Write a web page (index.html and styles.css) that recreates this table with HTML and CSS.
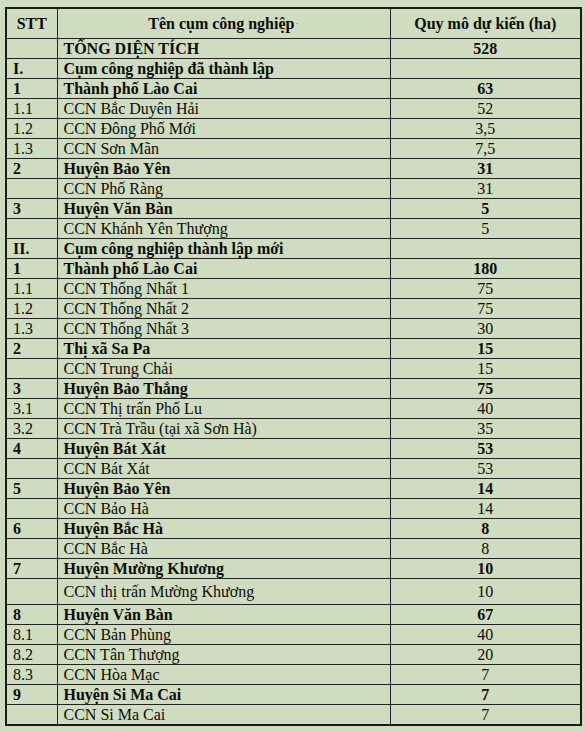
FILE: index.html
```html
<!DOCTYPE html>
<html lang="vi">
<head>
<meta charset="utf-8">
<title>Cụm công nghiệp</title>
<link rel="stylesheet" href="styles.css">
</head>
<body>
<table class="tbl">
  <colgroup>
    <col class="c-stt">
    <col class="c-name">
    <col class="c-qty">
  </colgroup>
  <thead>
    <tr class="head">
      <th>STT</th>
      <th>Tên cụm công nghiệp<span class="speck">·</span></th>
      <th>Quy mô dự kiến (ha)</th>
    </tr>
  </thead>
  <tbody>
    <tr class="b"><td></td><td>TỔNG DIỆN TÍCH</td><td class="n">528</td></tr>
    <tr class="b"><td>I.</td><td>Cụm công nghiệp đã thành lập</td><td class="n"></td></tr>
    <tr class="b"><td>1</td><td>Thành phố Lào Cai</td><td class="n">63</td></tr>
    <tr><td>1.1</td><td>CCN Bắc Duyên Hải</td><td class="n">52</td></tr>
    <tr><td>1.2</td><td>CCN Đông Phố Mới</td><td class="n">3,5</td></tr>
    <tr><td>1.3</td><td>CCN Sơn Mãn</td><td class="n">7,5</td></tr>
    <tr class="b"><td>2</td><td>Huyện Bảo Yên</td><td class="n">31</td></tr>
    <tr><td></td><td>CCN Phố Ràng</td><td class="n">31</td></tr>
    <tr class="b"><td>3</td><td>Huyện Văn Bàn</td><td class="n">5</td></tr>
    <tr><td></td><td>CCN Khánh Yên Thượng</td><td class="n">5</td></tr>
    <tr class="b"><td>II.</td><td>Cụm công nghiệp thành lập mới</td><td class="n"></td></tr>
    <tr class="b"><td>1</td><td>Thành phố Lào Cai</td><td class="n">180</td></tr>
    <tr><td>1.1</td><td>CCN Thống Nhất 1</td><td class="n">75</td></tr>
    <tr><td>1.2</td><td>CCN Thống Nhất 2</td><td class="n">75</td></tr>
    <tr><td>1.3</td><td>CCN Thống Nhất 3</td><td class="n">30</td></tr>
    <tr class="b"><td>2</td><td>Thị xã Sa Pa</td><td class="n">15</td></tr>
    <tr><td></td><td>CCN Trung Chải</td><td class="n">15</td></tr>
    <tr class="b"><td>3</td><td>Huyện Bảo Thắng</td><td class="n">75</td></tr>
    <tr><td>3.1</td><td>CCN Thị trấn Phố Lu</td><td class="n">40</td></tr>
    <tr><td>3.2</td><td>CCN Trà Trầu (tại xã Sơn Hà)</td><td class="n">35</td></tr>
    <tr class="b"><td>4</td><td>Huyện Bát Xát</td><td class="n">53</td></tr>
    <tr><td></td><td>CCN Bát Xát</td><td class="n">53</td></tr>
    <tr class="b"><td>5</td><td>Huyện Bảo Yên</td><td class="n">14</td></tr>
    <tr><td></td><td>CCN Bảo Hà</td><td class="n">14</td></tr>
    <tr class="b"><td>6</td><td>Huyện Bắc Hà</td><td class="n">8</td></tr>
    <tr><td></td><td>CCN Bắc Hà</td><td class="n">8</td></tr>
    <tr class="b"><td>7</td><td>Huyện Mường Khương</td><td class="n">10</td></tr>
    <tr class="tall"><td></td><td>CCN thị trấn Mường Khương</td><td class="n">10</td></tr>
    <tr class="b"><td>8</td><td>Huyện Văn Bàn</td><td class="n">67</td></tr>
    <tr><td>8.1</td><td>CCN Bản Phùng</td><td class="n">40</td></tr>
    <tr><td>8.2</td><td>CCN Tân Thượng</td><td class="n">20</td></tr>
    <tr><td>8.3</td><td>CCN Hòa Mạc</td><td class="n">7</td></tr>
    <tr class="b"><td>9</td><td>Huyện Si Ma Cai</td><td class="n">7</td></tr>
    <tr><td></td><td>CCN Si Ma Cai</td><td class="n">7</td></tr>
  </tbody>
</table>
</body>
</html>
```

FILE: styles.css
```css
html, body {
  margin: 0;
  padding: 0;
  background: #cfdcc0;
}

body {
  padding: 7px 0 0 5px;
  font-family: "Liberation Serif", "Times New Roman", serif;
  font-size: 16px;
  color: #0c0c0c;
}

.tbl {
  border-collapse: collapse;
  width: 575px;
  table-layout: fixed;
  border: 2px solid #1a1a1a;
}

.c-stt { width: 51px; }
.c-name { width: 333px; }
.c-qty { width: 191px; }

.tbl th,
.tbl td {
  border: 1px solid #222;
  padding: 0 0 0 6px;
  height: 19px;
  line-height: 18px;
  text-align: left;
  vertical-align: middle;
  white-space: nowrap;
}

.tbl td:first-child {
  padding-left: 6px;
}

.tbl th {
  height: 29px;
  font-weight: bold;
  text-align: center;
  padding: 0;
}

.tbl td.n {
  text-align: center;
  padding: 0;
}

.b td {
  font-weight: bold;
}

.tall td {
  height: 25px;
}

.speck {
  font-weight: normal;
  font-size: 10px;
  color: #6c7266;
  margin-left: 1px;
  vertical-align: 2px;
}
```
